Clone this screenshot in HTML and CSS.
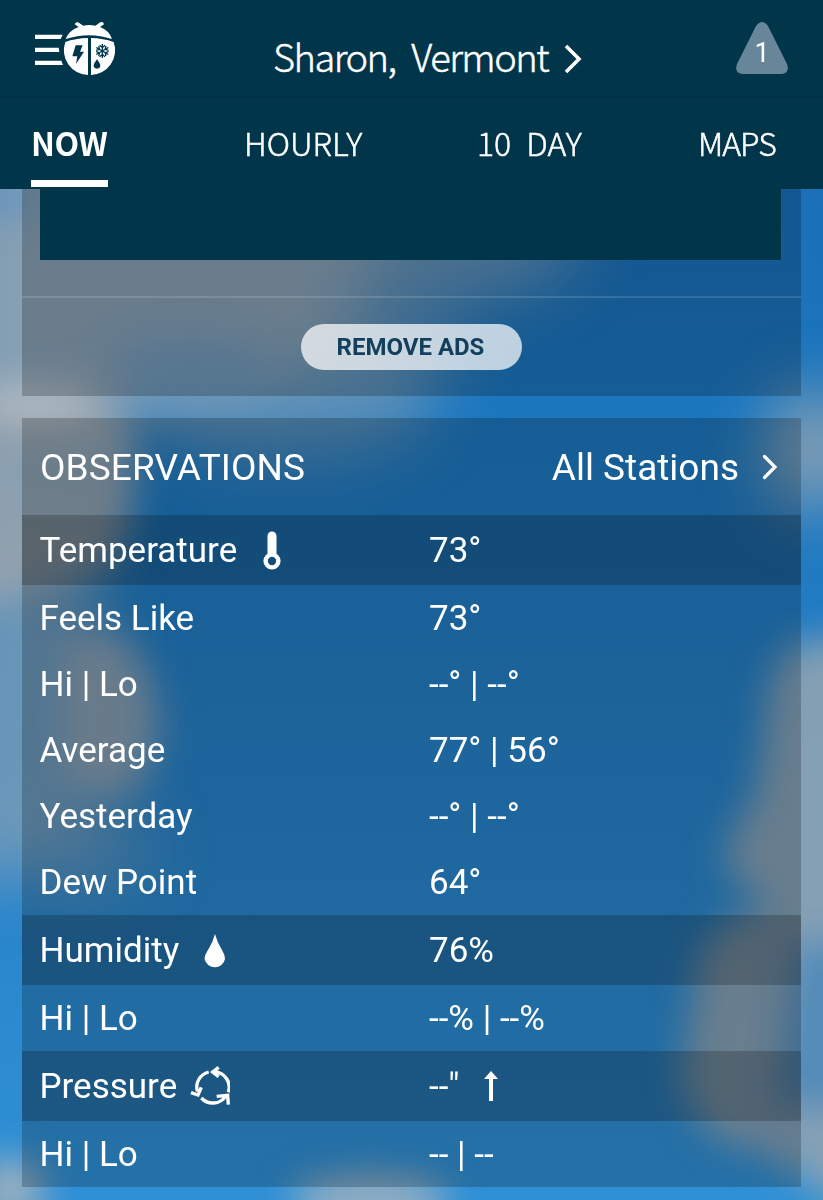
FILE: index.html
```html
<!DOCTYPE html>
<html lang="en">
<head>
  <meta charset="UTF-8">
  <meta name="viewport" content="width=device-width, initial-scale=1.0">
  <title>Sharon, Vermont</title>
  <link rel="stylesheet" href="styles.css">
</head>
<body>
  <!-- sky -->
  <svg class="sky" viewBox="0 0 823 1200" preserveAspectRatio="none" aria-hidden="true">
    <defs>
      <linearGradient id="blue" x1="0" y1="0" x2="0" y2="1">
        <stop offset="0.15" stop-color="#1a6fb8"/>
        <stop offset="0.35" stop-color="#1c77bf"/>
        <stop offset="0.6" stop-color="#257fc5"/>
        <stop offset="1" stop-color="#2f90d6"/>
      </linearGradient>
      <filter id="soft" x="-50%" y="-50%" width="200%" height="200%"><feGaussianBlur stdDeviation="18"/></filter>
      <filter id="wide" x="-50%" y="-50%" width="200%" height="200%"><feGaussianBlur stdDeviation="32"/></filter>
    </defs>
    <rect width="823" height="1200" fill="url(#blue)"/>
    <g filter="url(#wide)" fill="#8fa3b2">
      <path d="M-60 100H400L360 310L340 360L220 400L120 420L-60 420Z" opacity=".92"/>
      <ellipse cx="450" cy="240" rx="130" ry="60" opacity=".6"/>
      <ellipse cx="290" cy="400" rx="140" ry="60" opacity=".5"/>
      <ellipse cx="400" cy="340" rx="60" ry="60" opacity=".4"/>
      <path d="M-60 520H90L95 700L80 850L-60 900Z" opacity=".65"/>
      <ellipse cx="90" cy="845" rx="60" ry="50" opacity=".4"/>
      <ellipse cx="815" cy="450" rx="48" ry="60" opacity=".95"/>
    </g>
    <g filter="url(#soft)">
      <path d="M-60 380H80Q130 380 134 450Q140 530 100 570L-60 620Z" fill="#96a3ad" opacity=".9"/>
      <ellipse cx="35" cy="400" rx="60" ry="22" fill="#c0c4c8" opacity=".7"/>
      <ellipse cx="190" cy="365" rx="80" ry="30" fill="#4f8bc0" opacity=".4"/>
      <path d="M60 640Q115 610 145 665Q175 735 140 785Q105 815 60 780Z" fill="#92a1ae" opacity=".85"/>
      <path d="M880 640H800Q765 665 765 730L755 800Q710 850 735 880L770 910Q695 920 695 985L680 1080Q700 1150 760 1150L880 1230Z" fill="#8fa3b1" opacity=".9"/>
      <path d="M790 940H860V1110H770Z" fill="#4688b9" opacity=".8"/>
      <ellipse cx="10" cy="1190" rx="35" ry="32" fill="#a9b4bd" opacity=".9"/>
      <ellipse cx="370" cy="1200" rx="80" ry="25" fill="#a9b4bd" opacity=".9"/>
      <ellipse cx="0" cy="198" rx="34" ry="18" fill="#4f8bc6" opacity=".7"/>
    </g>
  </svg>

  <header class="header">
    <div class="topbar">
      <a class="menu" href="#" aria-label="Menu">
        <svg width="110" height="80" viewBox="0 0 330 240">
          <g fill="#fff">
            <path d="M45 74H128L122 87H45ZM45 113H116L118 126H45ZM45 152H124L129 165H45Z"/>
            <path d="M137 87Q147 61 176 51L164 43Q166 35 174 37L190 47Q208 43 226 47L241 37Q250 34 252 43L240 51Q267 61 276 87Q207 64 137 87Z"/>
            <path d="M136 96Q166 85 204 84V195A74 74 0 0 1 136 96ZM281 96Q250 85 213 84V195A74 74 0 0 0 281 96Z"/>
          </g>
          <path fill="#01354a" d="M167 106H188L180 125H192L168 162L172 139H157ZM231 148Q241 162 241 166A10 10 0 0 1 221 166Q221 162 231 148Z"/>
          <g fill="none" stroke="#01354a" stroke-width="4">
            <path id="arm" d="M247 102V144M239 106L247 113L255 106M239 140L247 133L255 140"/>
            <use href="#arm" transform="rotate(60 247 123)"/>
            <use href="#arm" transform="rotate(120 247 123)"/>
          </g>
        </svg>
      </a>
      <a class="location" href="#">
        <span>Sharon, Vermont</span>
        <svg width="18" height="30" viewBox="0 0 18 30"><path d="M2 2L15 15L2 28" fill="none" stroke="#fff" stroke-width="3.6"/></svg>
      </a>
      <a class="alert" href="#">
        <svg width="54" height="52" viewBox="0 0 54 52"><path d="M21 4Q27 -4 33 4L52 42Q55 51 47 52H7Q-1 51 2 42Z" fill="#67869a"/></svg>
        <span>1</span>
      </a>
    </div>
    <nav class="tabs">
      <a class="tab active" href="#">NOW</a>
      <a class="tab hourly" href="#">HOURLY</a>
      <a class="tab tenday" href="#">10 DAY</a>
      <a class="tab maps" href="#">MAPS</a>
    </nav>
  </header>

  <main>
    <section class="card ads">
      <div class="ad"></div>
      <div class="remove">
        <button class="remove-btn">REMOVE ADS</button>
      </div>
    </section>

    <section class="card">
      <div class="card-head">
        <h2>OBSERVATIONS</h2>
        <a class="stations" href="#">
          <span>All Stations</span>
          <svg width="16" height="26" viewBox="0 0 16 26"><path d="M2.500 2.500L13 13L2.500 23.500" fill="none" stroke="#fff" stroke-width="3.200" stroke-linecap="round"/></svg>
        </a>
      </div>
      <div class="row main">
        <span class="label">Temperature
          <svg class="thermo" width="18" height="40" viewBox="0 0 18 40"><path d="M9 6V24" stroke="#fff" stroke-width="9" stroke-linecap="round"/><circle cx="9" cy="31" r="6.400" fill="#164d77" stroke="#fff" stroke-width="4.400"/></svg>
        </span>
        <span>73°</span>
      </div>
      <div class="row"><span class="label">Feels Like</span><span>73°</span></div>
      <div class="row"><span class="label">Hi | Lo</span><span>--° | --°</span></div>
      <div class="row"><span class="label">Average</span><span>77° | 56°</span></div>
      <div class="row"><span class="label">Yesterday</span><span>--° | --°</span></div>
      <div class="row"><span class="label">Dew Point</span><span>64°</span></div>
      <div class="row main">
        <span class="label">Humidity
          <svg class="drop" width="22" height="36" viewBox="0 0 22 36"><path d="M11 0Q13 8 18 16Q21 21 21 25A10.400 10.400 0 0 1 .6 25Q.6 21 4 16Q9 8 11 0Z" fill="#fff"/></svg>
        </span>
        <span>76%</span>
      </div>
      <div class="row"><span class="label">Hi | Lo</span><span>--% | --%</span></div>
      <div class="row main">
        <span class="label">Pressure
          <svg class="cycle" width="40" height="40" viewBox="0 0 120 120">
            <g fill="none" stroke="#fff" stroke-width="10">
              <path d="M56 18A47 47 0 0 0 22 76M3 80L24 87L34 64"/>
              <path d="M34 96A47 47 0 0 0 107 91M80 91L113 88L115 116"/>
              <path d="M115 79A47 47 0 0 0 73 17M86 4L68 18L86 32"/>
            </g>
          </svg>
        </span>
        <span class="value">--"
          <svg class="up" width="14" height="30" viewBox="0 0 14 30"><path d="M7 0L14 8H9V30H5V8H0Z" fill="#fff"/></svg>
        </span>
      </div>
      <div class="row"><span class="label">Hi | Lo</span><span>-- | --</span></div>
    </section>
  </main>
</body>
</html>
```

FILE: styles.css
```css
* {
  box-sizing: border-box;
}
body {
  margin: 0;
  height: 1200px;
  overflow: hidden;
  background-color: #1c77bf;
  color: #fff;
  font-family: Roboto, sans-serif;
}
a {
  color: inherit;
  text-decoration: none;
}
svg {
  display: block;
  flex: none;
}
.sky {
  position: absolute;
  top: 0;
  left: 0;
  width: 100%;
  height: 1200px;
  z-index: -1;
}

/* header */
.header {
  height: 189px;
  background-color: #01354a;
  font-family: "Noto Sans CJK SC", sans-serif;
  font-weight: 300;
  -webkit-text-stroke: 0.5px #fff;
}
.topbar {
  display: grid;
  grid-template-columns: 253px 1fr 88px;
  height: 97px;
  padding-left: 20px;
  border-bottom: 1px solid #022f43;
}
.menu {
  padding-top: 10px;
}
.location {
  display: flex;
  align-items: center;
  justify-content: space-between;
  width: 309px;
  padding-top: 22px;
  font-size: 38px;
  line-height: 1;
  letter-spacing: -1.5px;
  white-space: nowrap;
  word-spacing: 9px;
}
.location span {
  padding-bottom: 6px;
}
.alert {
  display: grid;
  place-items: center;
  align-self: start;
  width: 54px;
  margin-top: 22px;
  font-family: Roboto, sans-serif;
  font-size: 27px;
  font-weight: 400;
  -webkit-text-stroke: 0;
}
.alert > * {
  grid-area: 1 / 1;
}
.alert span {
  padding-top: 10px;
}
.tabs {
  display: grid;
  grid-template-columns: 213px 233px 221px 1fr;
  height: 90px;
  padding-left: 31px;
  font-size: 32px;
  line-height: 1;
  word-spacing: 8px;
}
.tab {
  display: flex;
  align-items: center;
  white-space: nowrap;
}
.active {
  width: 77px;
  border-bottom: 7px solid #fff;
  padding-top: 7px;
  font-weight: 700;
  letter-spacing: -0.5px;
  -webkit-text-stroke: 0;
}
.maps {
  letter-spacing: -1px;
}

/* cards */
.card {
  margin: 0 22px 22px;
  background-color: rgba(0, 0, 0, 0.21);
}
.ads {
  height: 207px;
}
.ad {
  height: 71px;
  margin: 0 20px 0 18px;
  background-color: #01354a;
}
.remove {
  display: flex;
  justify-content: center;
  margin-top: 36px;
  padding-top: 26px;
  border-top: 2px solid rgba(255, 255, 255, 0.13);
}
.remove-btn {
  width: 221px;
  height: 46px;
  padding: 0 2px 0 0;
  border: none;
  border-radius: 23px;
  background-color: rgba(255, 255, 255, 0.72);
  color: #12405c;
  font: 700 24px Roboto, sans-serif;
}
.card-head {
  display: flex;
  justify-content: space-between;
  align-items: center;
  height: 97px;
  padding: 1px 23px 0 18px;
  font-size: 37px;
}
.card-head h2 {
  margin: 0;
  font-size: 37px;
  font-weight: 400;
  letter-spacing: 0.1px;
}
.stations {
  display: flex;
  align-items: center;
  gap: 23px;
}
.row {
  display: grid;
  grid-template-columns: 389.5px 1fr;
  align-items: center;
  height: 66px;
  padding-left: 17.5px;
  font-size: 35px;
}
.main {
  height: 70px;
  background-color: rgba(0, 0, 0, 0.21);
}
.label,
.value {
  display: flex;
  align-items: center;
}
.thermo {
  margin-left: 26px;
}
.drop {
  margin: 3px 0 0 25px;
}
.cycle {
  margin-left: 13px;
}
.up {
  margin-left: 24px;
}
```
